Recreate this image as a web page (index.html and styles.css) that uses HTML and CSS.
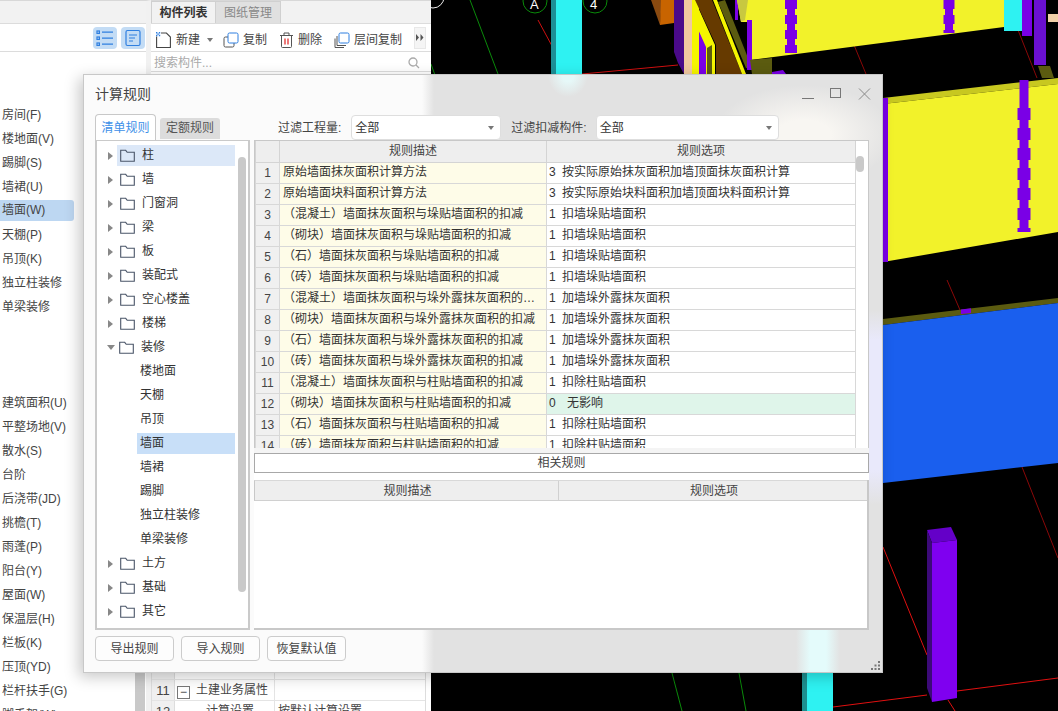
FILE: index.html
```html
<!DOCTYPE html>
<html lang="zh-CN">
<head>
<meta charset="utf-8">
<title>计算规则</title>
<link rel="stylesheet" href="styles.css">
</head>
<body>
<div class="app">
  <aside class="nav">
    <div class="nav-top"></div>
    <div class="nav-tools">
      <span class="view-btn"><svg width="24" height="22" viewBox="0 0 24 22"><g fill="none" stroke="#2f7fe0" stroke-width="1.2"><rect x="4" y="4" width="2.4" height="2.4"/><rect x="4" y="10" width="2.4" height="2.4"/><rect x="4" y="16" width="2.4" height="2.4"/><path d="M9 5.2h11M9 11.2h11M9 17.2h11"/></g></svg></span>
      <span class="view-btn"><svg width="24" height="22" viewBox="0 0 24 22"><g fill="none" stroke="#2f7fe0" stroke-width="1.2"><rect x="5" y="3.5" width="14" height="15" rx="1.5"/><path d="M8 8h8M8 11h6M8 14h4"/></g></svg></span>
    </div>
    <ul class="nav-list">
      <li>房间(F)</li><li>楼地面(V)</li><li>踢脚(S)</li><li>墙裙(U)</li><li class="on">墙面(W)</li><li>天棚(P)</li><li>吊顶(K)</li><li>独立柱装修</li><li>单梁装修</li>
    </ul>
    <ul class="nav-list nav-list-second">
      <li>建筑面积(U)</li><li>平整场地(V)</li><li>散水(S)</li><li>台阶</li><li>后浇带(JD)</li><li>挑檐(T)</li><li>雨蓬(P)</li><li>阳台(Y)</li><li>屋面(W)</li><li>保温层(H)</li><li>栏板(K)</li><li>压顶(YD)</li><li>栏杆扶手(G)</li><li>脚手架(W)</li>
    </ul>
    <span class="nav-scroll"></span>
  </aside>

  <section class="props">
    <div class="props-tabs"><span class="ptab ptab-on">构件列表</span><span class="ptab">图纸管理</span></div>
    <div class="props-tools">
      <span class="tool tool-new"><svg width="15" height="16" viewBox="0 0 15 16"><path d="M.6 4.5v11h13.800V5l-4-4H5" fill="none" stroke="#444" stroke-width="1.100"/><path d="M0 0h1.400v1.400H0zM2.800 0h1.400v1.400H2.800zM1.400 1.400h1.400v1.400H1.400zM0 2.800h1.400v1.400H0zM2.800 2.800h1.400v1.400H2.800z" fill="#2f7fe0"/></svg>新建<i class="caret"></i></span>
      <span class="tool"><svg width="16" height="16" viewBox="0 0 16 16"><rect x="1" y="5" width="10" height="10" rx="1.500" fill="#fff" stroke="#555"/><rect x="5" y="1" width="10" height="10" rx="1.500" fill="#fff" stroke="#2f7fe0"/></svg>复制</span>
      <span class="tool"><svg width="15" height="16" viewBox="0 0 15 16"><path d="M1 3.500h13M5 3V1h5v2M2.500 4v10.500a1 1 0 0 0 1 1h8a1 1 0 0 0 1-1V4" fill="none" stroke="#555"/><path d="M6 6.500v6M9 6.500v6" stroke="#e02020" stroke-width="1.200"/></svg>删除</span>
      <span class="tool"><svg width="16" height="16" viewBox="0 0 16 16"><path d="M3 4v9.500h9M1 6.500v9h9" fill="none" stroke="#555"/><rect x="5" y="1" width="10" height="10" rx="1.500" fill="#fff" stroke="#2f7fe0"/></svg>层间复制</span>
      <span class="more"><svg width="8" height="7" viewBox="0 0 8 7"><path d="M0 0l3 3.500L0 7zM4.500 0l3 3.500-3 3.500z" fill="#555"/></svg></span>
    </div>
    <div class="props-search"><span>搜索构件...</span><svg width="12" height="12" viewBox="0 0 12 12"><circle cx="5" cy="5" r="4" fill="none" stroke="#aaa" stroke-width="1.300"/><path d="M8 8l3 3" stroke="#aaa" stroke-width="1.300"/></svg></div>
    <div class="props-body">
      <div class="prow prow-cut"><span class="pnum"></span><span class="pname"></span><span class="pval"></span></div>
      <div class="prow"><span class="pnum">11</span><span class="pname"><i class="minus">−</i>土建业务属性</span><span class="pval"></span></div>
      <div class="prow"><span class="pnum">12</span><span class="pname pname-sub">计算设置</span><span class="pval">按默认计算设置</span></div>
    </div>
  </section>

  <main class="view">
    <svg class="scene" viewBox="431 0 627 711" width="627" height="711">
      <rect x="431" y="0" width="627" height="711" fill="#000"/>
      <g fill="none" stroke-width="1">
        <path d="M470 0L498 74M431 64L436 78M672 673L682 711M739 673L746 711" stroke="#0a8a0a"/>
        <path d="M538 20L552 46M582 74L678 65" stroke="#d01010"/>
        <path d="M854 45L866 74M1018 30L1037 78M947 280L960 310M1022 467L1058 558" stroke="#8a0808"/>
        <path d="M883 547L927 655M833 707L927 695M957 691L1058 678M948 700L955 711" stroke="#e01010"/>
        <circle cx="433" cy="-3" r="11" stroke="#eee"/>
        <circle cx="535" cy="1" r="12" stroke="#0a8a0a"/>
        <circle cx="595" cy="1" r="12" stroke="#0a8a0a"/>
      </g>
      <text class="axis" x="530" y="9">A</text>
      <text class="axis" x="590" y="9">4</text>
      <rect x="551" y="0" width="5" height="74" fill="#1d8f96"/>
      <rect x="556" y="0" width="26" height="74" fill="#2ef2f2"/>

      <path d="M651 0H662L660 25Z" fill="#8a4a10"/>
      <path d="M661 0H674V23L660 25Z" fill="#c86400"/>
      <path d="M674 0H684V74L678 63L674 52Z" fill="#4a0a8a"/>
      <rect x="684" y="0" width="8" height="74" fill="#f0c8a0"/>
      <rect x="692" y="0" width="7" height="74" fill="#f5f500"/>
      <path d="M699 15L707 33V74H699Z" fill="#7a00e6"/>
      <path d="M697 5L715 45V74H706V47L697 27Z" fill="#f5f500"/>
      <path d="M707 48L712 45V74H707Z" fill="#5c5c10"/>
      <path d="M695 0H712L742 74H716V45Z" fill="#663a00"/>
      <path d="M713 0H717L746 74H742Z" fill="#f5f500"/>
      <path d="M718 2L725 0L752 68H746Z" fill="#5b5b10"/>
      <path d="M735 0H738V20H735Z" fill="#7a00e6"/>
      <path d="M737 0H1004V27L750 60V22H741Z" fill="#f2f22a"/>
      <path d="M737 0L748 0L745 20L741 22Z" fill="#c8c840"/>
      <rect x="747" y="20" width="5" height="50" fill="#7a00e6"/>
      <path d="M750 60L772 58V74H752Z" fill="#5b5b10"/>
      <path d="M772 72L783 70L786 74H772Z" fill="#7a00e6"/>

      <rect x="787" y="0" width="8" height="53" fill="#7a00e6"/>
      <path d="M791 0V53" stroke="#7a00e6" stroke-width="12" stroke-dasharray="9 6"/>
      <rect x="945" y="0" width="8" height="33" fill="#7a00e6"/>
      <path d="M949 0V33" stroke="#7a00e6" stroke-width="11" stroke-dasharray="9 6"/>
      <rect x="1004" y="0" width="18" height="31" fill="#2ef2f2"/>
      <rect x="1022" y="0" width="10" height="36" fill="#7a00e6"/>
      <rect x="1034" y="0" width="12" height="65" fill="#6a10d0"/>
      <path d="M1038 66H1050L1054 78H1042Z" fill="#5b5b10"/>
      <rect x="1048" y="14" width="10" height="8" fill="#f2d0a8"/>

      <path d="M883 98L1058 78V84L883 104Z" fill="#c8c820"/>
      <path d="M883 104L1058 84V232L883 262Z" fill="#f2f22a"/>
      <path d="M885 98V262" stroke="#7a00e6" stroke-width="6"/>
      <path d="M1024 80V232" stroke="#7a00e6" stroke-width="9"/>
      <path d="M1024 108V232" stroke="#7a00e6" stroke-width="13" stroke-dasharray="12 8"/>

      <path d="M883 319L1058 298V303L883 325Z" fill="#5b5b10"/>
      <path d="M961 309.500L971 308.300V313L961 314Z" fill="#7a00e6"/>
      <path d="M883 325L1058 303V463L883 483Z" fill="#1a5fee"/>

      <path d="M927 530L951 527L957 540L932 543Z" fill="#6400c8"/>
      <path d="M932 543L957 540V698L932 702Z" fill="#7f00f0"/>
      <path d="M927 530L932 543V702L927 688Z" fill="#3c0a78"/>

      <rect x="802" y="673" width="5" height="38" fill="#1d8f8f"/>
      <rect x="807" y="673" width="26" height="38" fill="#2ef2f2"/>
    </svg>
  </main>
</div>

<div class="dialog">
  <header class="dlg-head">
    <h1>计算规则</h1>
    <div class="win">
      <svg width="12" height="12" viewBox="0 0 12 12"><path d="M0 10.500H12" stroke="#777"/></svg>
      <svg width="12" height="12" viewBox="0 0 12 12"><rect x=".5" y=".5" width="10" height="9" fill="none" stroke="#777"/></svg>
      <svg width="13" height="12" viewBox="0 0 13 12"><path d="M1 .5L12 11.500M12 .5L1 11.500" stroke="#888"/></svg>
    </div>
  </header>

  <div class="dlg-bar">
    <div class="tabs"><span class="tab tab-on">清单规则</span><span class="tab">定额规则</span></div>
    <label class="filter filter-a">过滤工程量:<span class="select select-a">全部<i class="caret"></i></span></label>
    <label class="filter filter-b">过滤扣减构件:<span class="select select-b">全部<i class="caret"></i></span></label>
  </div>

  <div class="dlg-main">
    <nav class="tree">
      <ul>
        <li class="sel"><i class="arrow"></i><svg class="folder" viewBox="0 0 15 13"><path d="M.7 12.300V1.300h5l1.500 2h7.100v9z" fill="none" stroke="#4a5568" stroke-width="1.100"/></svg><span>柱</span></li>
        <li><i class="arrow"></i><svg class="folder" viewBox="0 0 15 13"><path d="M.7 12.300V1.300h5l1.500 2h7.100v9z" fill="none" stroke="#4a5568" stroke-width="1.100"/></svg><span>墙</span></li>
        <li><i class="arrow"></i><svg class="folder" viewBox="0 0 15 13"><path d="M.7 12.300V1.300h5l1.500 2h7.100v9z" fill="none" stroke="#4a5568" stroke-width="1.100"/></svg><span>门窗洞</span></li>
        <li><i class="arrow"></i><svg class="folder" viewBox="0 0 15 13"><path d="M.7 12.300V1.300h5l1.500 2h7.100v9z" fill="none" stroke="#4a5568" stroke-width="1.100"/></svg><span>梁</span></li>
        <li><i class="arrow"></i><svg class="folder" viewBox="0 0 15 13"><path d="M.7 12.300V1.300h5l1.500 2h7.100v9z" fill="none" stroke="#4a5568" stroke-width="1.100"/></svg><span>板</span></li>
        <li><i class="arrow"></i><svg class="folder" viewBox="0 0 15 13"><path d="M.7 12.300V1.300h5l1.500 2h7.100v9z" fill="none" stroke="#4a5568" stroke-width="1.100"/></svg><span>装配式</span></li>
        <li><i class="arrow"></i><svg class="folder" viewBox="0 0 15 13"><path d="M.7 12.300V1.300h5l1.500 2h7.100v9z" fill="none" stroke="#4a5568" stroke-width="1.100"/></svg><span>空心楼盖</span></li>
        <li><i class="arrow"></i><svg class="folder" viewBox="0 0 15 13"><path d="M.7 12.300V1.300h5l1.500 2h7.100v9z" fill="none" stroke="#4a5568" stroke-width="1.100"/></svg><span>楼梯</span></li>
        <li><i class="arrow arrow-open"></i><svg class="folder" viewBox="0 0 15 13"><path d="M.7 12.300V1.300h5l1.500 2h7.100v9z" fill="none" stroke="#4a5568" stroke-width="1.100"/></svg><span>装修</span></li>
        <li class="leaf"><span>楼地面</span></li>
        <li class="leaf"><span>天棚</span></li>
        <li class="leaf"><span>吊顶</span></li>
        <li class="leaf leaf-on"><span>墙面</span></li>
        <li class="leaf"><span>墙裙</span></li>
        <li class="leaf"><span>踢脚</span></li>
        <li class="leaf"><span>独立柱装修</span></li>
        <li class="leaf"><span>单梁装修</span></li>
        <li><i class="arrow"></i><svg class="folder" viewBox="0 0 15 13"><path d="M.7 12.300V1.300h5l1.500 2h7.100v9z" fill="none" stroke="#4a5568" stroke-width="1.100"/></svg><span>土方</span></li>
        <li><i class="arrow"></i><svg class="folder" viewBox="0 0 15 13"><path d="M.7 12.300V1.300h5l1.500 2h7.100v9z" fill="none" stroke="#4a5568" stroke-width="1.100"/></svg><span>基础</span></li>
        <li><i class="arrow"></i><svg class="folder" viewBox="0 0 15 13"><path d="M.7 12.300V1.300h5l1.500 2h7.100v9z" fill="none" stroke="#4a5568" stroke-width="1.100"/></svg><span>其它</span></li>
      </ul>
      <span class="tree-thumb"></span>
    </nav>

    <div class="rules">
      <div class="grid-wrap">
        <table class="grid">
          <colgroup><col class="c-num"><col class="c-desc"><col class="c-opt"></colgroup>
          <thead><tr><th></th><th>规则描述</th><th>规则选项</th></tr></thead>
          <tbody>
            <tr><td class="n">1</td><td class="d">原始墙面抹灰面积计算方法</td><td class="o"><b>3</b>按实际原始抹灰面积加墙顶面抹灰面积计算</td></tr>
            <tr><td class="n">2</td><td class="d">原始墙面块料面积计算方法</td><td class="o"><b>3</b>按实际原始块料面积加墙顶面块料面积计算</td></tr>
            <tr><td class="n">3</td><td class="d">（混凝土）墙面抹灰面积与垛贴墙面积的扣减</td><td class="o"><b>1</b>扣墙垛贴墙面积</td></tr>
            <tr><td class="n">4</td><td class="d">（砌块）墙面抹灰面积与垛贴墙面积的扣减</td><td class="o"><b>1</b>扣墙垛贴墙面积</td></tr>
            <tr><td class="n">5</td><td class="d">（石）墙面抹灰面积与垛贴墙面积的扣减</td><td class="o"><b>1</b>扣墙垛贴墙面积</td></tr>
            <tr><td class="n">6</td><td class="d">（砖）墙面抹灰面积与垛贴墙面积的扣减</td><td class="o"><b>1</b>扣墙垛贴墙面积</td></tr>
            <tr><td class="n">7</td><td class="d">（混凝土）墙面抹灰面积与垛外露抹灰面积的扣减</td><td class="o"><b>1</b>加墙垛外露抹灰面积</td></tr>
            <tr><td class="n">8</td><td class="d">（砌块）墙面抹灰面积与垛外露抹灰面积的扣减</td><td class="o"><b>1</b>加墙垛外露抹灰面积</td></tr>
            <tr><td class="n">9</td><td class="d">（石）墙面抹灰面积与垛外露抹灰面积的扣减</td><td class="o"><b>1</b>加墙垛外露抹灰面积</td></tr>
            <tr><td class="n">10</td><td class="d">（砖）墙面抹灰面积与垛外露抹灰面积的扣减</td><td class="o"><b>1</b>加墙垛外露抹灰面积</td></tr>
            <tr><td class="n">11</td><td class="d">（混凝土）墙面抹灰面积与柱贴墙面积的扣减</td><td class="o"><b>1</b>扣除柱贴墙面积</td></tr>
            <tr><td class="n">12</td><td class="d">（砌块）墙面抹灰面积与柱贴墙面积的扣减</td><td class="o o-mod"><b>0</b>无影响</td></tr>
            <tr><td class="n">13</td><td class="d">（石）墙面抹灰面积与柱贴墙面积的扣减</td><td class="o"><b>1</b>扣除柱贴墙面积</td></tr>
            <tr><td class="n">14</td><td class="d">（砖）墙面抹灰面积与柱贴墙面积的扣减</td><td class="o"><b>1</b>扣除柱贴墙面积</td></tr>
          </tbody>
        </table>
        <span class="grid-thumb"></span>
      </div>
      <div class="related-bar"><button class="related" type="button">相关规则</button></div>
      <div class="sub">
        <div class="sub-head"><span>规则描述</span><span>规则选项</span></div>
      </div>
    </div>
  </div>

  <footer class="dlg-foot">
    <button type="button">导出规则</button>
    <button type="button">导入规则</button>
    <button type="button">恢复默认值</button>
  </footer>

  <svg class="grip" width="10" height="10" viewBox="0 0 10 10"><path d="M7 0h2v2H7zM3.500 3.500h2v2h-2zM7 3.500h2v2H7zM0 7h2v2H0zM3.500 7h2v2h-2zM7 7h2v2H7z" fill="#777"/></svg>
</div>
</body>
</html>
```
FILE: styles.css
```css
* { box-sizing: border-box; }
html, body { margin: 0; height: 100%; overflow: hidden; }
body {
  width: 1058px;
  height: 711px;
  position: relative;
  background: #fff;
  color: #333;
  font: 12px/1.2 "Liberation Sans", "Noto Sans CJK SC", sans-serif;
}
ul { list-style: none; margin: 0; padding: 0; }
i { font-style: normal; }

.app { display: flex; width: 1058px; height: 711px; }

/* left category column */
.nav { width: 151px; flex: none; position: relative; border-right: 5px solid #f1f1f1; overflow: hidden; border-top: 1px solid #d8d8d8; }
.nav-top { height: 23px; background: #f2f2f2; border-bottom: 1px solid #dcdcdc; }
.nav-tools { height: 28px; display: flex; justify-content: flex-end; align-items: center; gap: 4px; padding-right: 1px; border-bottom: 1px solid #dcdcdc; }
.view-btn { width: 24px; height: 22px; background: #c3dcf5; border-radius: 4px; display: flex; }
.nav-list { margin-top: 51px; }
.nav-list li { height: 24px; line-height: 24px; padding-left: 2px; width: 74px; white-space: nowrap; color: #444; }
.nav-list .on { background: #bdd7f2; border-radius: 0 3px 3px 0; height: 21px; line-height: 21px; margin: 1px 0 2px; }
.nav-list-second { margin-top: 72px; }
.nav-scroll { position: absolute; left: 135px; top: 400px; bottom: 0; width: 10px; background: #c9c9c9; }

/* component panel */
.props { width: 280px; flex: none; border-top: 1px solid #d8d8d8; position: relative; overflow: hidden; }
.props-tabs { display: flex; height: 23px; background: #f2f2f2; border-bottom: 1px solid #dcdcdc; }
.ptab { width: 65px; line-height: 22px; text-align: center; background: #e0e0e0; color: #888; border: 1px solid #d0d0d0; border-width: 1px 1px 0 0; font-weight: 400; }
.ptab-on { background: #f2f2f2; color: #333; font-weight: 700; border-left: 1px solid #d0d0d0; }
.props-tools { height: 28px; display: flex; align-items: center; padding: 5px 0 0 5px; gap: 12px; border-bottom: 1px solid #dcdcdc; white-space: nowrap; }
.tool { display: flex; align-items: center; gap: 4px; color: #444; }
.tool-new { gap: 5px; }
.tool .caret { margin: 0 -2px 0 2px; }
.more { margin-top: -5px; width: 12px; height: 22px; background: #f5f5f5; border: 1px solid #e8e8e8; display: flex; align-items: center; justify-content: center; }
.caret { display: inline-block; width: 0; height: 0; border: 3px solid transparent; border-top: 4px solid #777; border-bottom: 0; }
.props-search { height: 20px; display: flex; justify-content: space-between; align-items: center; padding: 3px 11px 0 3px; color: #aaa; border-bottom: 1px solid #dcdcdc; }
.props-body { position: absolute; left: 0; right: 5px; top: 672px; border-left: 1px solid #ddd; border-right: 1px solid #ddd; }
.prow { display: flex; height: 21px; border-bottom: 1px solid #e4e4e4; font-size: 13px; line-height: 21px; color: #444; }
.prow-cut { height: 7px; }
.pnum { width: 23px; background: #f0f0f0; text-align: center; border-right: 1px solid #ddd; flex: none; }
.pname { width: 100px; border-right: 1px solid #e4e4e4; flex: none; white-space: nowrap; padding-left: 2px; font-size: 12px; }
.pname-sub { padding-left: 31px; }
.pval { flex: 1; padding-left: 3px; font-size: 12px; white-space: nowrap; }
.minus { display: inline-block; width: 13px; height: 13px; line-height: 11px; border: 1px solid #777; text-align: center; margin-right: 6px; vertical-align: -2px; }

/* 3D view */
.view { flex: 1; min-width: 0; background: #000; overflow: hidden; }
.scene { display: block; }
.axis { fill: #fff; font: 13px "Liberation Sans", sans-serif; }

/* dialog */
.dialog {
  position: absolute;
  left: 83px;
  top: 74px;
  width: 800px;
  height: 599px;
  border: 1px solid #c8c8c8;
  box-shadow: -4px 4px 14px rgba(0, 0, 0, .22);
  padding: 0 13px 0 11px;
  display: flex;
  flex-direction: column;
  background:
    linear-gradient(90deg, rgba(228, 251, 251, 0) 712px, #e4fbfb 726px, #e4fbfb 742px, rgba(228, 251, 251, 0) 756px) left bottom / 100% 44px no-repeat,
    radial-gradient(ellipse 20px 22px at 484px 0, #e6f8f8 30%, rgba(230, 248, 248, 0) 100%),
    radial-gradient(ellipse 90px 50px at 720px 60px, #f8f6f2 30%, rgba(248, 246, 242, 0) 100%),
    linear-gradient(180deg, rgba(232, 232, 251, 0) 235px, #e9e9fb 265px, #e9e9fb 395px, rgba(232, 232, 251, 0) 430px) right top / 14px 100% no-repeat,
    linear-gradient(90deg, #fbfbfb 0, #fbfbfb 338px, #e2e2e2 350px);
}
.dlg-head { height: 39px; flex: none; display: flex; justify-content: space-between; align-items: flex-start; }
.dlg-head h1 { margin: 10px 0 0; font-size: 14px; font-weight: 400; color: #444; line-height: 18px; }
.win { display: flex; gap: 16px; margin: 13px -2px 0 0; }

.dlg-bar { height: 26px; flex: none; display: flex; align-items: stretch; position: relative; }
.tabs { display: flex; gap: 4px; width: 183px; flex: none; margin-bottom: -1px; z-index: 1; }
.tab { width: 60px; margin-top: 4px; height: 21px; line-height: 21px; background: #dcdcdc; border-radius: 3px 3px 0 0; text-align: center; color: #555; }
.tab-on { width: 61px; margin-top: 0; height: 26px; line-height: 26px; background: #fff; border: 1px solid #c8c8c8; border-bottom: 0; border-radius: 4px 4px 0 0; color: #3d8fe8; }
.filter { display: flex; align-items: center; gap: 10px; padding-top: 2px; color: #444; white-space: nowrap; }
.select { height: 25px; margin-top: -2px; padding: 2px 6px 0 3px; background: #fff; border: 1px solid #dedede; border-radius: 4px; display: flex; justify-content: space-between; align-items: center; color: #333; }
.select-a { width: 150px; }
.select-b { width: 183px; }
.filter-b { margin-left: 10px; gap: 9px; }

.dlg-main { height: 490px; flex: none; display: flex; gap: 4px; }

.tree { width: 155px; flex: none; position: relative; background: #fff; border: 2px solid #cacaca; border-top-width: 1px; padding-top: 4px; overflow: hidden; }
.tree li { height: 24px; position: relative; display: flex; align-items: center; padding: 0 14px 3px 11px; }
.arrow { width: 0; height: 0; border: 4px solid transparent; border-left: 5px solid #888; border-right: 0; margin-right: 7px; flex: none; }
.arrow-open { border: 4px solid transparent; border-top: 5px solid #888; border-bottom: 0; margin-right: 4px; margin-left: -1px; }
.folder { width: 15px; height: 13px; margin-right: 7px; flex: none; }
.tree .sel::before, .leaf-on::before { content: ""; position: absolute; top: 0; right: 13px; height: 21px; z-index: 0; }
.tree .sel::before { left: 20px; background: #dce8f8; }
.leaf-on::before { left: 40px; background: #c8dff8; }
.tree li > * { position: relative; z-index: 1; }
.tree .leaf { padding-left: 43px; }
.tree-thumb { position: absolute; left: 141px; top: 16px; width: 8px; height: 435px; background: #c9c9c9; border-radius: 4px; }

.rules { width: 615px; flex: none; display: flex; flex-direction: column; }
.grid-wrap { height: 308px; flex: none; position: relative; overflow: hidden; background: #fff; border-top: 1px solid #c8c8c8; border-left: 1px solid #c8c8c8; border-right: 1px solid #c8c8c8; }
.grid { width: 600px; table-layout: fixed; border-collapse: collapse; border-right: 1px solid #d8d8d8; }
.c-num { width: 24px; }
.c-desc { width: 267px; }
.c-opt { width: 309px; }
.grid th { height: 21px; padding: 0; background: #eeeeee; font-weight: 400; color: #444; border: 1px solid #d4d4d4; border-top: 0; }
.grid td { height: 21px; padding: 0; border: 1px solid #d8d8d8; white-space: nowrap; overflow: hidden; color: #333; }
.grid .n { background: #f0f0f0; text-align: center; color: #444; padding-top: 1px; }
.grid .d { background: #fefce8; padding: 0 2px 0 3px; text-overflow: ellipsis; }
.grid .o { padding-left: 2px; background: #fff; }
.o b { display: inline-block; width: 13px; font-weight: 400; }
.grid .o-mod { background: #dff5ea; }
.o-mod b { width: 18px; }
.grid-thumb { position: absolute; right: 4px; top: 15px; width: 8px; height: 16px; background: #c9c9c9; border-radius: 4px; }

.related-bar { height: 32px; flex: none; padding-top: 5px; background: linear-gradient(180deg, #f4f4f4 0, #f4f4f4 25px, #fff 25px); }
.related { display: block; width: 100%; height: 20px; padding: 1px 0 0; background: #fff; border: 1px solid #a8a8a8; font: inherit; color: #444; }

.sub { flex: 1; background: #fff; border: solid #c8c8c8; border-width: 0 2px 2px 0; }
.sub-head { display: flex; height: 21px; background: #eeeeee; border-bottom: 1px solid #d0d0d0; border-top: 1px solid #d8d8d8; border-left: 1px solid #c8c8c8; }
.sub-head span { line-height: 20px; text-align: center; color: #444; padding-left: 2px; }
.sub-head span:first-child { width: 304px; border-right: 1px solid #d0d0d0; }
.sub-head span:last-child { flex: 1; }

.dlg-foot { display: flex; gap: 7px; padding-top: 6px; }
.dlg-foot button { width: 79px; height: 25px; padding: 2px 0 0; background: rgba(255, 255, 255, .6); border: 1px solid #ccc; border-radius: 4px; font: inherit; color: #444; }
.grip { position: absolute; right: 1px; bottom: 1px; }
```
